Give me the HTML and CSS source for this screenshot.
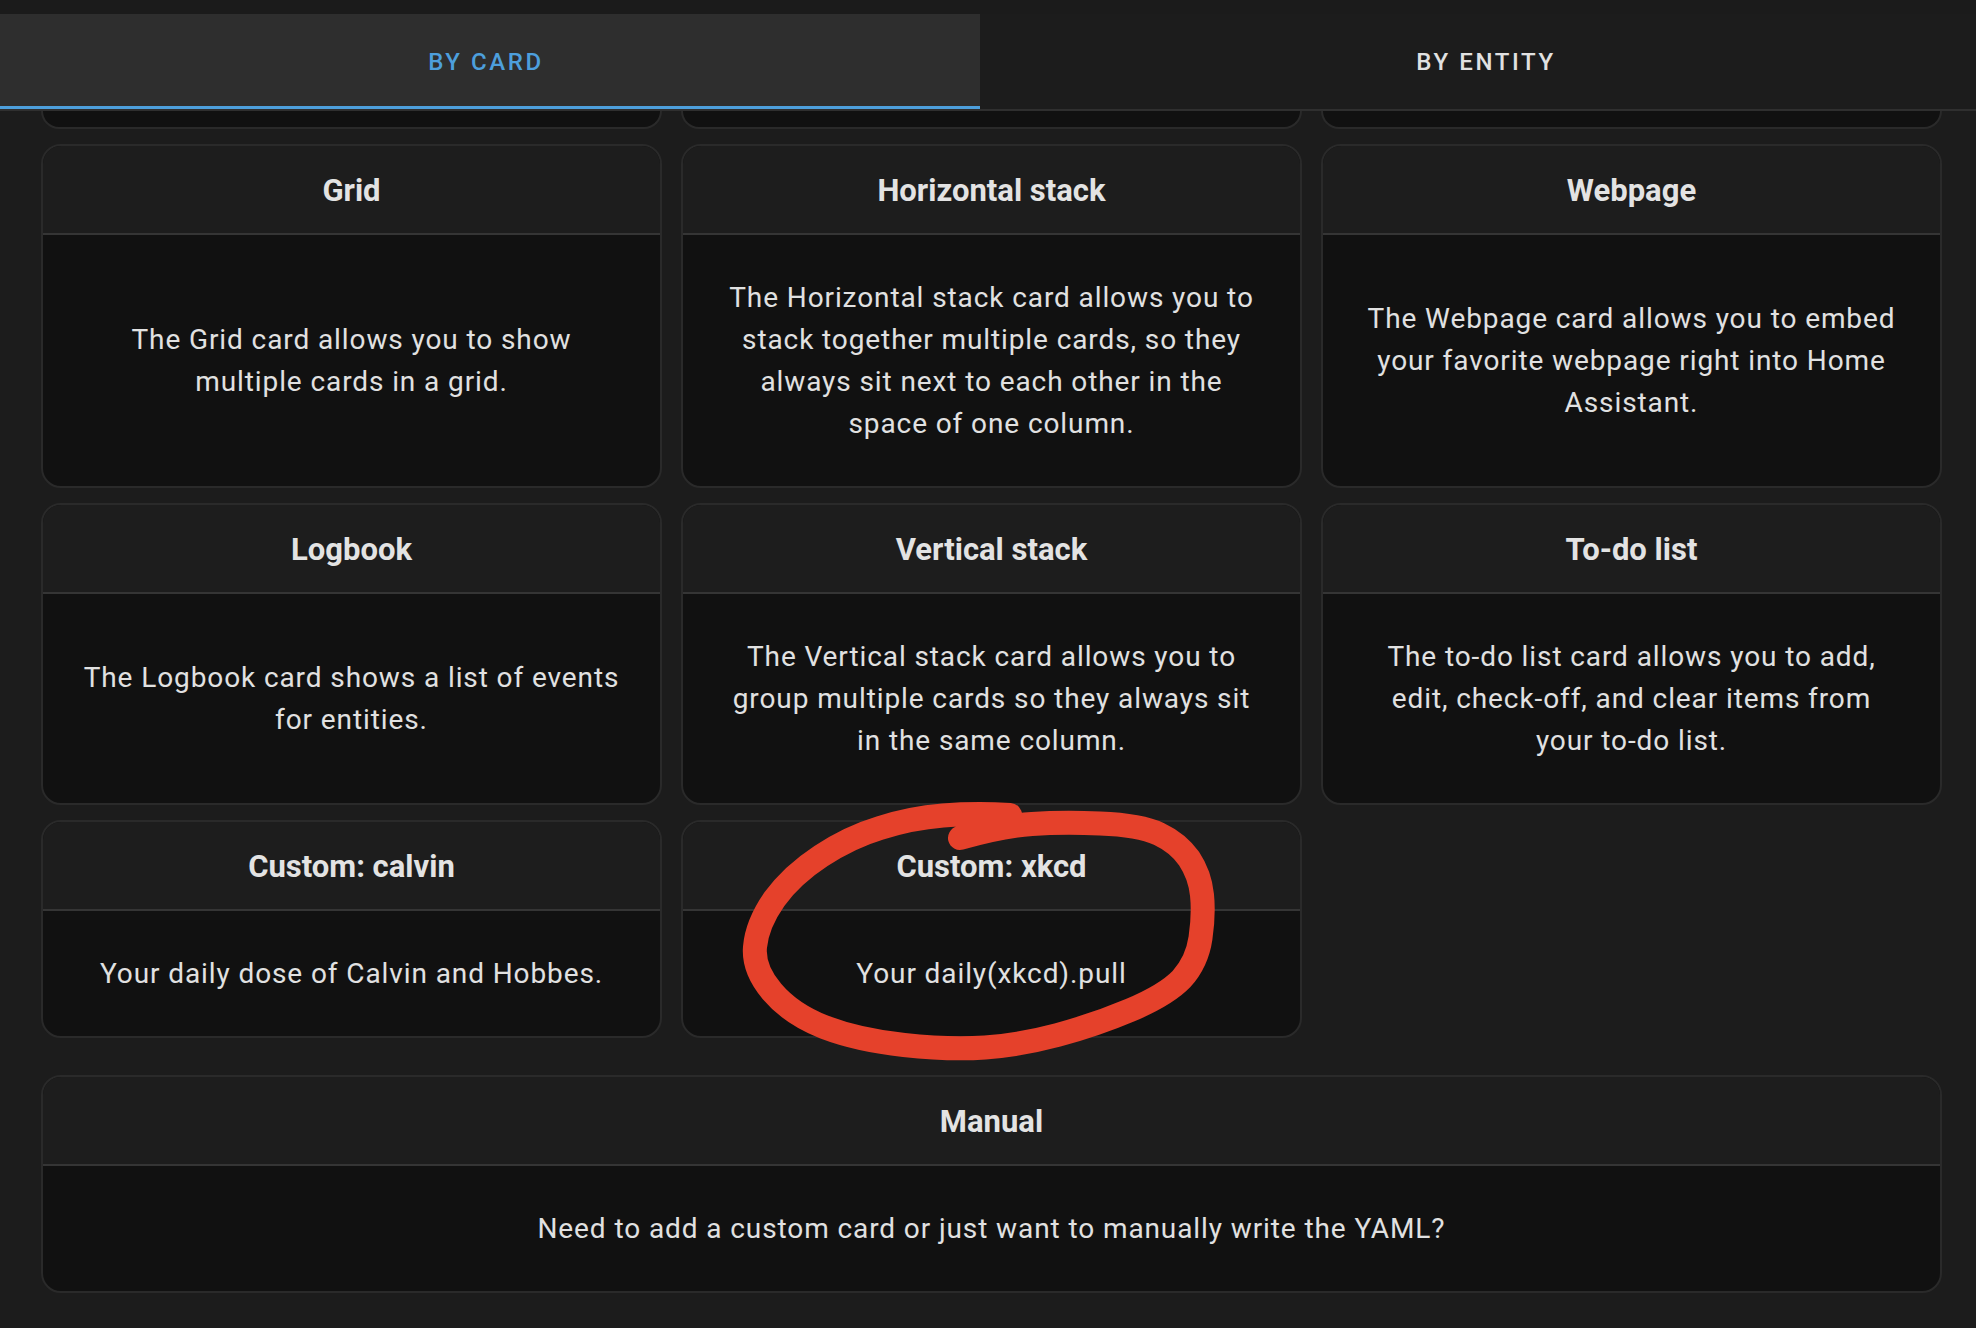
FILE: index.html
```html
<!DOCTYPE html>
<html lang="en">
<head>
<meta charset="utf-8">
<title>Card picker</title>
<link rel="stylesheet" href="styles.css">
</head>
<body>
<div class="page">
  <div class="top-strip"></div>
  <nav class="tabs">
    <div class="tab active">BY CARD</div>
    <div class="tab">BY ENTITY</div>
  </nav>
  <main class="content">
    <div class="grid">
      <div class="stub"></div>
      <div class="stub"></div>
      <div class="stub"></div>

      <div class="card">
        <div class="card-header">Grid</div>
        <div class="card-body">The Grid card allows you to show multiple cards in a grid.</div>
      </div>
      <div class="card">
        <div class="card-header">Horizontal stack</div>
        <div class="card-body">The Horizontal stack card allows you to stack together multiple cards, so they always sit next to each other in the space of one column.</div>
      </div>
      <div class="card">
        <div class="card-header">Webpage</div>
        <div class="card-body">The Webpage card allows you to embed your favorite webpage right into Home Assistant.</div>
      </div>

      <div class="card">
        <div class="card-header">Logbook</div>
        <div class="card-body">The Logbook card shows a list of events for entities.</div>
      </div>
      <div class="card">
        <div class="card-header">Vertical stack</div>
        <div class="card-body">The Vertical stack card allows you to group multiple cards so they always sit in the same column.</div>
      </div>
      <div class="card">
        <div class="card-header">To-do list</div>
        <div class="card-body">The to-do list card allows you to add, edit, check-off, and clear items from your to-do list.</div>
      </div>

      <div class="card">
        <div class="card-header">Custom: calvin</div>
        <div class="card-body">Your daily dose of Calvin and Hobbes.</div>
      </div>
      <div class="card">
        <div class="card-header">Custom: xkcd</div>
        <div class="card-body">Your daily(xkcd).pull</div>
      </div>
    </div>

    <div class="card manual">
      <div class="card-header">Manual</div>
      <div class="card-body">Need to add a custom card or just want to manually write the YAML?</div>
    </div>
  </main>

  <svg class="annotation" width="1976" height="1328" viewBox="0 0 1976 1328" aria-hidden="true">
    <path d="M 960 838 Q 1002 826 1032 824 Q 1062 822 1100 823.5 Q 1140 825 1159 834 Q 1178 843 1189 858.5 Q 1200 875 1202 895 Q 1204 914 1200.5 938 Q 1197 962 1181.5 979 Q 1166 995 1130.5 1010 Q 1095 1025 1057.5 1035 Q 1020 1045 985 1047.5 Q 950 1050 904 1045 Q 858 1040 824 1027 Q 791 1014 772 991.5 Q 753 969 755 947 Q 757 924 774.5 899 Q 792 875 821 856 Q 850 837 880 828 Q 911 818 943 815.5 Q 975 813 1010 815" fill="none" stroke="#e5412b" stroke-width="24" stroke-linecap="round" stroke-linejoin="round"/>
  </svg>
</div>
</body>
</html>
```

FILE: styles.css
```css
* {
  box-sizing: border-box;
}

html, body {
  margin: 0;
  padding: 0;
  background: #1c1c1c;
}

body {
  font-family: Roboto, "Liberation Sans", sans-serif;
  color: #e1e1e1;
  width: 1976px;
  height: 1328px;
  overflow: hidden;
}

.page {
  position: relative;
  width: 1976px;
  height: 1328px;
  overflow: hidden;
}

.top-strip {
  height: 14px;
  background: #1b1b1b;
}

.tabs {
  display: flex;
  height: 97px;
  border-bottom: 2px solid #2f2f2f;
  background: #1c1c1c;
}

.tab {
  width: 980px;
  display: flex;
  align-items: center;
  justify-content: center;
  font-size: 24px;
  font-weight: 500;
  letter-spacing: 2.6px;
  color: #e1e1e1;
}

.tab.active {
  background: #2e2e2e;
  color: #4d9fdc;
  border-bottom: 3px solid #4d9fdc;
  padding-top: 3px;
  padding-right: 8px;
}

.tab:last-child {
  flex: 1;
  padding-left: 16px;
}

.content {
  padding: 0 34px 0 41px;
}

.grid {
  display: grid;
  grid-template-columns: repeat(3, 1fr);
  column-gap: 19px;
  row-gap: 15px;
}

.stub {
  height: 18px;
  background: #111111;
  border: 2px solid #2a2a2a;
  border-top: none;
  border-radius: 0 0 20px 20px;
}

.card {
  display: flex;
  flex-direction: column;
  border: 2px solid #2a2a2a;
  border-radius: 20px;
  overflow: hidden;
  background: #111111;
}

.card-header {
  height: 89px;
  flex: none;
  display: flex;
  align-items: center;
  justify-content: center;
  background: #1d1d1d;
  border-bottom: 2px solid #353535;
  font-size: 31px;
  font-weight: 700;
  color: #e3e3e3;
  padding-top: 2px;
}

.card-body {
  flex: 1;
  display: flex;
  align-items: center;
  justify-content: center;
  text-align: center;
  padding: 41.5px 38px;
  font-size: 28px;
  line-height: 42px;
  letter-spacing: 0.9px;
  color: #e1e1e1;
}

.manual {
  margin-top: 37px;
}

.annotation {
  position: absolute;
  top: 0;
  left: 0;
  pointer-events: none;
}
```
